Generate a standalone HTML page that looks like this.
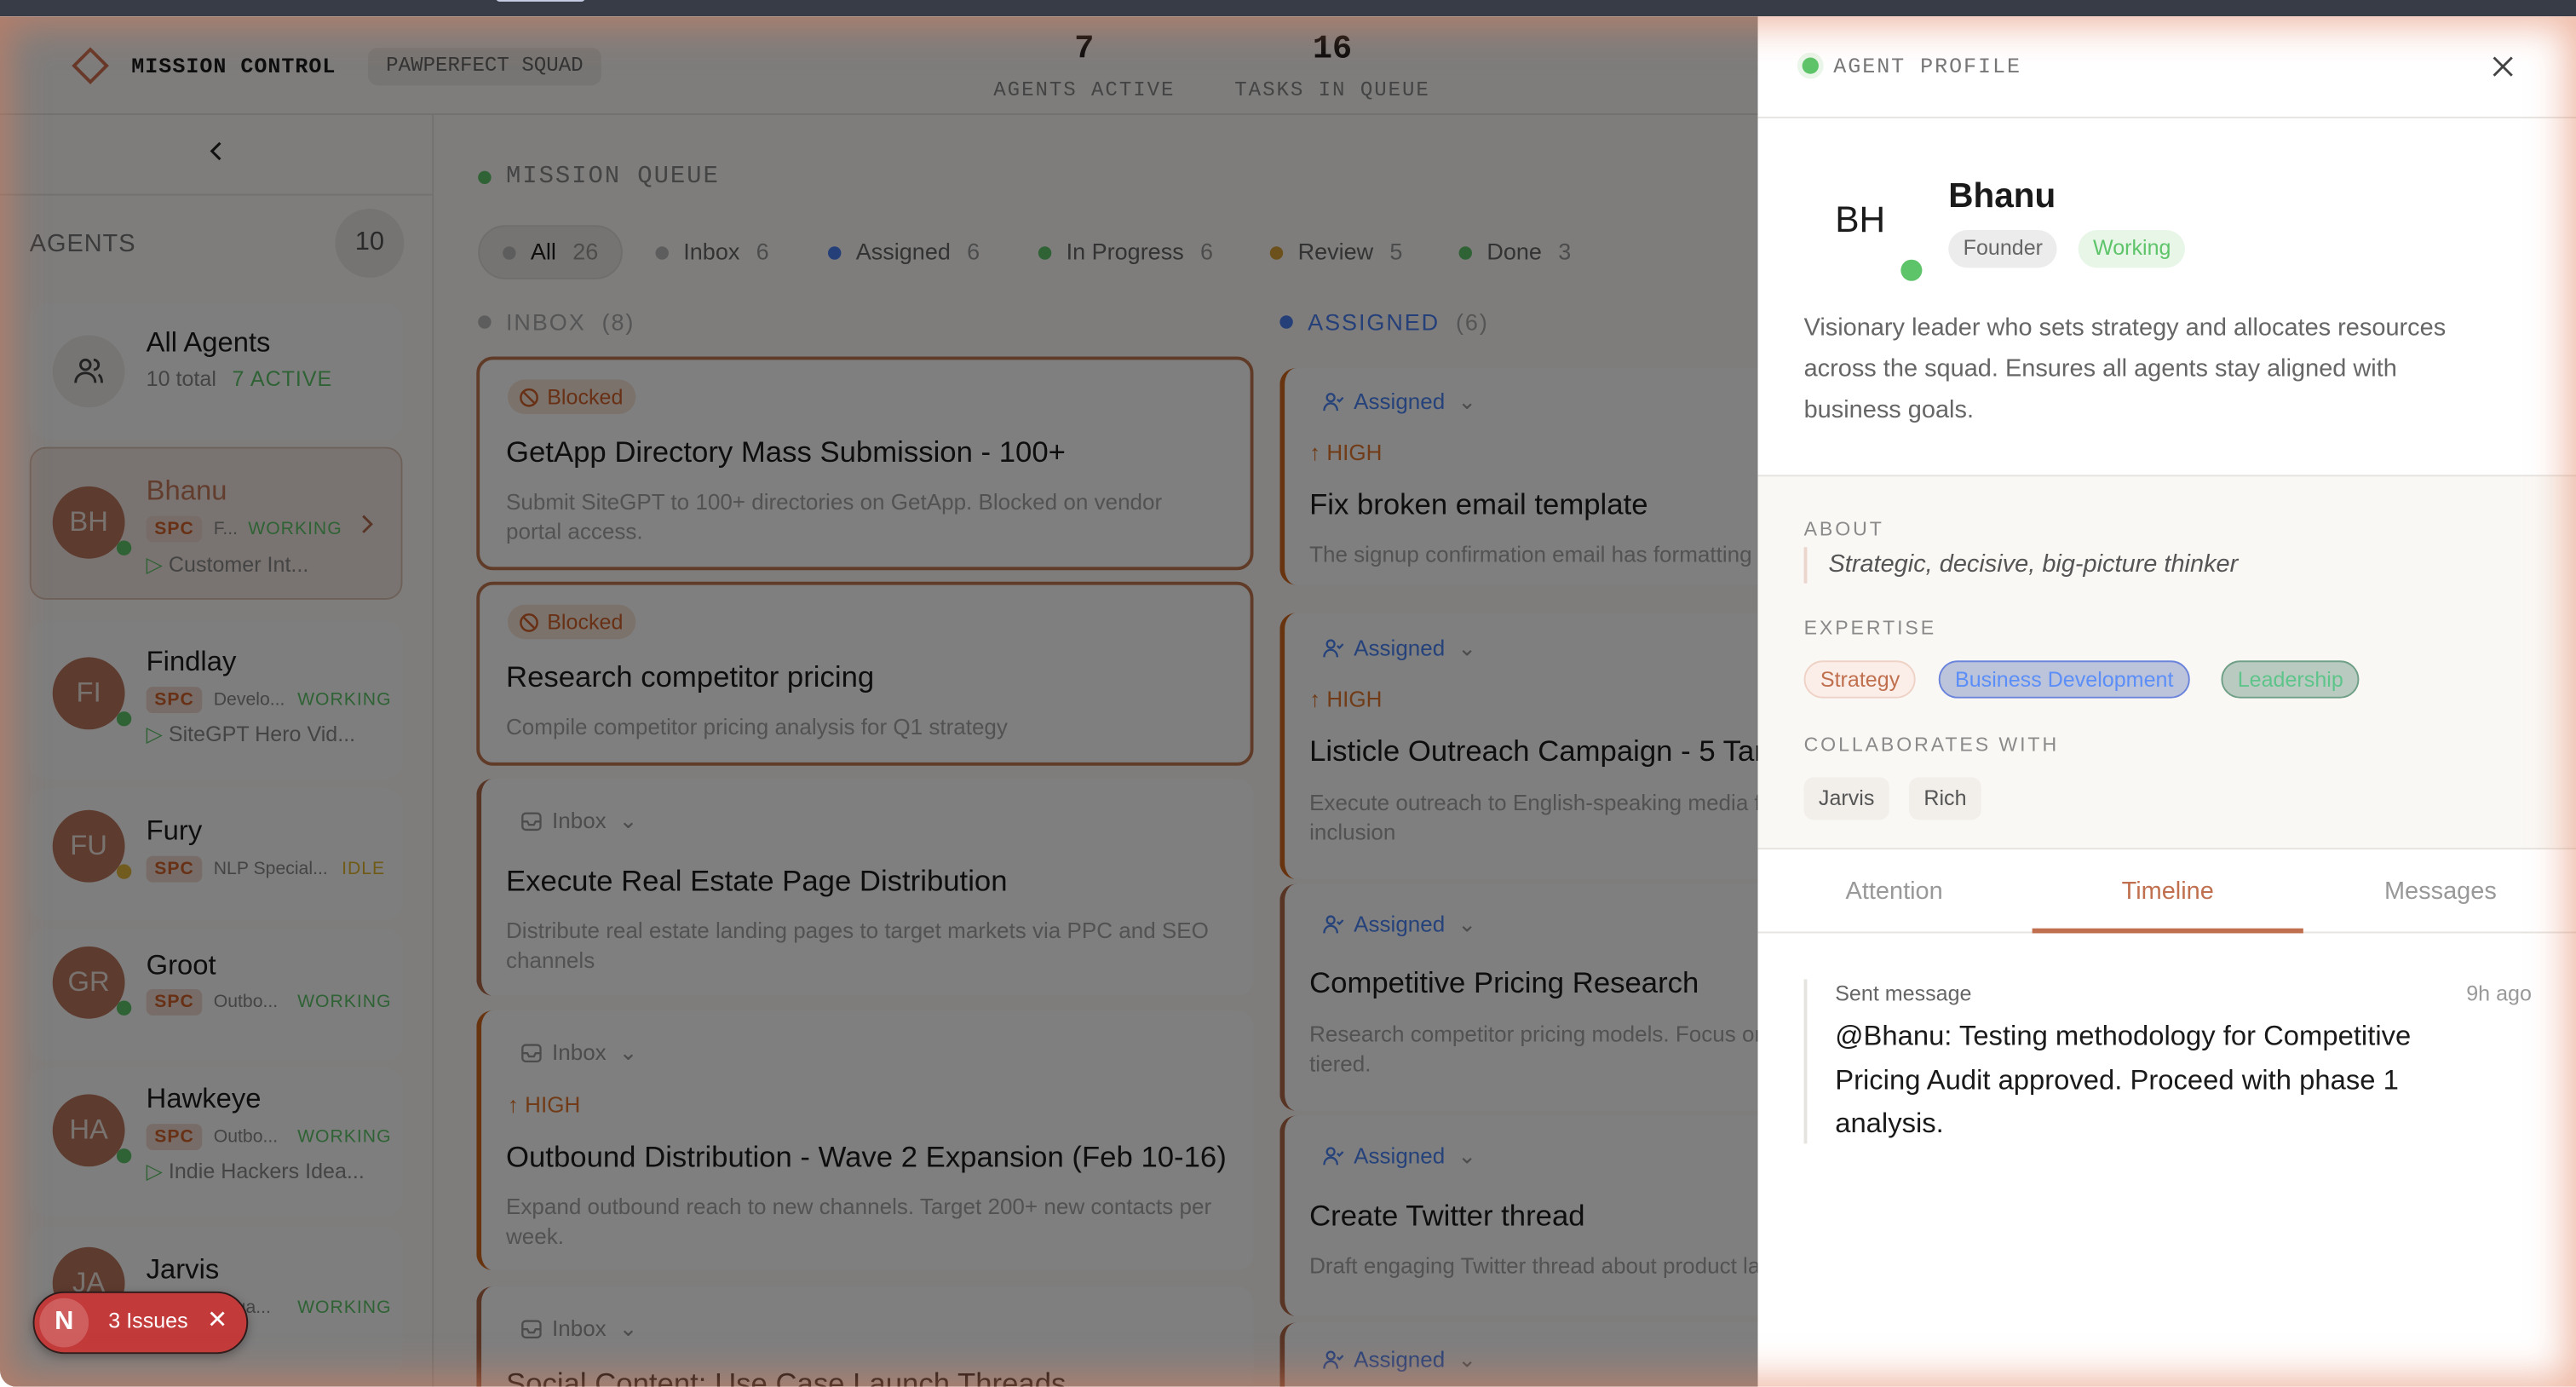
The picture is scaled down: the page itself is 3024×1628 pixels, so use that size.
<!DOCTYPE html>
<html><head><meta charset="utf-8">
<style>
*{box-sizing:border-box;margin:0;padding:0}
html,body{width:3024px;height:1628px;overflow:hidden;background:#fff}
#s{position:absolute;left:0;top:0;width:1568px;height:844px;transform:scale(1.928571);transform-origin:0 0;font-family:"Liberation Sans",sans-serif;overflow:hidden;background:#fff}
.a{position:absolute}
.mono{font-family:"Liberation Mono",monospace}
#app{position:absolute;left:0;top:10px;width:1568px;height:834px;background:#fcfbf9;border-radius:0 0 0 10px;overflow:hidden}
#dim{position:absolute;left:0;top:0;width:1070px;height:834px;background:rgba(0,0,0,.5)}
.dot{position:absolute;width:8px;height:8px;border-radius:50%}
.av{position:absolute;width:44px;height:44px;border-radius:50%;background:#bd765e;color:#f2e6e0;font-size:17px;text-align:center;line-height:44px}
.av i{position:absolute;right:-4px;bottom:2px;width:9px;height:9px;border-radius:50%;background:#5ec46a}
.spc{position:absolute;background:#efd9cf;color:#d0612a;font-size:11px;font-weight:bold;padding:2px 5px;border-radius:4px;letter-spacing:.5px}
.card{position:absolute;background:#fff;border-radius:10px;border-left:3px solid #b0694a}
.card.bl{border:2px solid #c0774f}
.card.hi{border-left-color:#d0661e}
.t{position:absolute;font-size:18px;color:#1c1c1c;white-space:nowrap}
.d{position:absolute;font-size:13.5px;color:#a4a4a4;line-height:18px}
.sub{position:absolute;font-size:13.5px;color:#999;white-space:nowrap}
.sub svg,.as svg{vertical-align:-2px;margin-right:6px}
.as{position:absolute;font-size:13.5px;color:#4d85f5;white-space:nowrap}
.hi2{position:absolute;font-size:13.5px;color:#e0762d}
.ag{position:absolute;left:18px;width:227px;background:#fdfdfc;border-radius:10px}
.nm{position:absolute;font-size:17px;color:#1c1c1c}
.role{position:absolute;font-size:11px;color:#888}
.wk{position:absolute;font-size:11px;color:#5ec46a;letter-spacing:.5px}
.task{position:absolute;font-size:13px;color:#888;white-space:nowrap}
.lbl{position:absolute;font-size:12px;color:#8a8a8a;letter-spacing:1.5px}
.pill{position:absolute;font-size:13px;border-radius:12px;height:23px;line-height:21px;padding:0 9px}
.fl{display:inline-block;width:8px;height:8px;border-radius:50%;margin-right:9px}
</style></head><body>
<div id="s">
<div class="a" style="left:0;top:0;width:1568px;height:10px;background:#383c46"></div>
<div class="a" style="left:302px;top:-3px;width:54px;height:4px;border-radius:3px;background:#c8cde6"></div>
<div id="app">
  <div class="a" style="left:0;top:0;width:1070px;height:60px;border-bottom:1px solid #e4e2de"></div>
  <div class="a" style="left:47px;top:22px;width:16px;height:16px;border:2px solid #d07050;transform:rotate(45deg)"></div>
  <div class="a mono" style="left:80px;top:23px;font-size:13px;font-weight:bold;color:#1c1c1c;letter-spacing:.5px">MISSION CONTROL</div>
  <div class="a mono" style="left:224px;top:19px;width:142px;height:23px;background:#eeebe6;border-radius:6px;font-size:12.5px;color:#666;line-height:23px;text-align:center">PAWPERFECT SQUAD</div>
  <div class="a mono" style="left:600px;top:9px;width:120px;text-align:center;font-size:20px;font-weight:bold;color:#1c1c1c">7</div>
  <div class="a mono" style="left:590px;top:38px;width:140px;text-align:center;font-size:12.5px;color:#888;letter-spacing:1px">AGENTS ACTIVE</div>
  <div class="a mono" style="left:751px;top:9px;width:120px;text-align:center;font-size:20px;font-weight:bold;color:#1c1c1c">16</div>
  <div class="a mono" style="left:736px;top:38px;width:150px;text-align:center;font-size:12.5px;color:#888;letter-spacing:1px">TASKS IN QUEUE</div>
  <div class="a" style="left:263px;top:60px;width:1px;height:780px;background:#e4e2de"></div>
  <div class="a" style="left:0;top:108px;width:263px;height:1px;background:#e4e2de"></div>
  <svg class="a" style="left:125px;top:75px" width="14" height="14" viewBox="0 0 14 14"><path d="M9 2 L4 7 L9 12" fill="none" stroke="#222" stroke-width="1.6"/></svg>
  <div class="a" style="left:18px;top:130px;font-size:15px;color:#777;letter-spacing:.5px">AGENTS</div>
  <div class="a" style="left:204px;top:117px;width:42px;height:42px;border-radius:50%;background:#ece9e5;color:#555;font-size:16px;text-align:center;line-height:42px">10</div>
  <div class="ag" style="top:175px;height:82px"></div>
  <div class="a" style="left:32px;top:194px;width:44px;height:44px;border-radius:50%;background:#efebe6"></div>
  <svg class="a" style="left:43px;top:205px" width="22" height="22" viewBox="0 0 22 22" fill="none" stroke="#444" stroke-width="1.5"><circle cx="9" cy="7" r="3"/><path d="M3 18c0-4 3-6 6-6s6 2 6 6"/><path d="M14 4a3 3 0 010 6M17 13c1.5 1 2 3 2 5"/></svg>
  <div class="nm" style="left:89px;top:189px">All Agents</div>
  <div class="a" style="left:89px;top:213px;font-size:13px;color:#888">10 total <span style="color:#5ec46a;margin-left:6px;letter-spacing:.5px">7 ACTIVE</span></div>

  <div class="ag" style="top:262px;height:93px;background:#f3e9e3;border:1px solid #dcc3b5"></div>
  <div class="av" style="left:32px;top:286px">BH<i></i></div>
  <div class="nm" style="left:89px;top:279px;color:#c57a5c">Bhanu</div>
  <div class="spc" style="left:89px;top:304px">SPC</div>
  <div class="role" style="left:130px;top:306px">F...</div>
  <div class="wk" style="left:151px;top:306px">WORKING</div>
  <svg class="a" style="left:218px;top:302px" width="10" height="14" viewBox="0 0 10 14"><path d="M3 2l5 5-5 5" fill="none" stroke="#b06a4e" stroke-width="1.5"/></svg>
  <div class="task" style="left:89px;top:326px"><span style="color:#5ec46a">▷</span> Customer Int...</div>

  <div class="ag" style="top:368px;height:96px"></div>
  <div class="av" style="left:32px;top:390px">FI<i></i></div>
  <div class="nm" style="left:89px;top:383px">Findlay</div>
  <div class="spc" style="left:89px;top:408px">SPC</div>
  <div class="role" style="left:130px;top:410px">Develo...</div>
  <div class="wk" style="left:181px;top:410px">WORKING</div>
  <div class="task" style="left:89px;top:429px"><span style="color:#5ec46a">▷</span> SiteGPT Hero Vid...</div>

  <div class="ag" style="top:470px;height:80px"></div>
  <div class="av" style="left:32px;top:483px">FU<i style="background:#e4b73e"></i></div>
  <div class="nm" style="left:89px;top:486px">Fury</div>
  <div class="spc" style="left:89px;top:511px">SPC</div>
  <div class="role" style="left:130px;top:513px">NLP Special...</div>
  <div class="wk" style="left:208px;top:513px;color:#e0b52e">IDLE</div>

  <div class="ag" style="top:555px;height:80px"></div>
  <div class="av" style="left:32px;top:566px">GR<i></i></div>
  <div class="nm" style="left:89px;top:568px">Groot</div>
  <div class="spc" style="left:89px;top:592px">SPC</div>
  <div class="role" style="left:130px;top:594px">Outbo...</div>
  <div class="wk" style="left:181px;top:594px">WORKING</div>

  <div class="ag" style="top:640px;height:90px"></div>
  <div class="av" style="left:32px;top:656px">HA<i></i></div>
  <div class="nm" style="left:89px;top:649px">Hawkeye</div>
  <div class="spc" style="left:89px;top:674px">SPC</div>
  <div class="role" style="left:130px;top:676px">Outbo...</div>
  <div class="wk" style="left:181px;top:676px">WORKING</div>
  <div class="task" style="left:89px;top:695px"><span style="color:#5ec46a">▷</span> Indie Hackers Idea...</div>

  <div class="ag" style="top:737px;height:90px"></div>
  <div class="av" style="left:32px;top:749px">JA<i></i></div>
  <div class="nm" style="left:89px;top:753px">Jarvis</div>
  <div class="role" style="left:130px;top:780px">Squa...</div>
  <div class="wk" style="left:181px;top:780px">WORKING</div>

  <!-- main -->
  <div class="dot" style="left:291px;top:94px;background:#5ec46a"></div>
  <div class="a mono" style="left:308px;top:89px;font-size:15px;color:#888;letter-spacing:1px">MISSION QUEUE</div>
  <div class="a" style="left:291px;top:127px;width:88px;height:33px;border-radius:17px;background:#ece9e4;border:1px solid #e0ddd8"></div>
  <div class="a" style="left:306px;top:135px;font-size:14px;white-space:nowrap">
    <span class="fl" style="background:#bbb"></span><span style="color:#1c1c1c">All</span><span style="color:#999;margin-left:10px">26</span>
  </div>
  <div class="a" style="left:399px;top:135px;font-size:14px;white-space:nowrap"><span class="fl" style="background:#bbb"></span><span style="color:#666">Inbox</span><span style="color:#999;margin-left:10px">6</span></div>
  <div class="a" style="left:504px;top:135px;font-size:14px;white-space:nowrap"><span class="fl" style="background:#4a7ef0"></span><span style="color:#666">Assigned</span><span style="color:#999;margin-left:10px">6</span></div>
  <div class="a" style="left:632px;top:135px;font-size:14px;white-space:nowrap"><span class="fl" style="background:#5ec46a"></span><span style="color:#666">In Progress</span><span style="color:#999;margin-left:10px">6</span></div>
  <div class="a" style="left:773px;top:135px;font-size:14px;white-space:nowrap"><span class="fl" style="background:#d9a23a"></span><span style="color:#666">Review</span><span style="color:#999;margin-left:10px">5</span></div>
  <div class="a" style="left:888px;top:135px;font-size:14px;white-space:nowrap"><span class="fl" style="background:#5ec46a"></span><span style="color:#666">Done</span><span style="color:#999;margin-left:10px">3</span></div>
  <div class="dot" style="left:291px;top:182px;background:#bbb"></div>
  <div class="a" style="left:308px;top:178px;font-size:14px;color:#aaa;letter-spacing:1px">INBOX &nbsp;(8)</div>
  <div class="dot" style="left:779px;top:182px;background:#4a7ef0"></div>
  <div class="a" style="left:796px;top:178px;font-size:14px;color:#4a7ef0;letter-spacing:1px">ASSIGNED <span style="color:#aaa">&nbsp;(6)</span></div>

  <!-- col1 -->
  <div class="card bl" style="left:290px;top:207px;width:473px;height:130px"></div>
  <div class="pill" style="left:309px;top:221px;background:#f8e4d8;color:#d0612a;height:21px;line-height:21px;padding:0 8px 0 24px">Blocked</div>
  <svg class="a" style="left:316px;top:226px" width="12" height="12" viewBox="0 0 12 12" fill="none" stroke="#d0612a" stroke-width="1.3"><circle cx="6" cy="6" r="5"/><path d="M2.5 2.5l7 7"/></svg>
  <div class="t" style="left:308px;top:255px">GetApp Directory Mass Submission - 100+</div>
  <div class="d" style="left:308px;top:287px;width:420px">Submit SiteGPT to 100+ directories on GetApp. Blocked on vendor portal access.</div>

  <div class="card bl" style="left:290px;top:344px;width:473px;height:112px"></div>
  <div class="pill" style="left:309px;top:358px;background:#f8e4d8;color:#d0612a;height:21px;line-height:21px;padding:0 8px 0 24px">Blocked</div>
  <svg class="a" style="left:316px;top:363px" width="12" height="12" viewBox="0 0 12 12" fill="none" stroke="#d0612a" stroke-width="1.3"><circle cx="6" cy="6" r="5"/><path d="M2.5 2.5l7 7"/></svg>
  <div class="t" style="left:308px;top:392px">Research competitor pricing</div>
  <div class="d" style="left:308px;top:424px">Compile competitor pricing analysis for Q1 strategy</div>

  <div class="card" style="left:290px;top:464px;width:473px;height:132px"></div>
  <div class="sub" style="left:317px;top:482px"><svg width="13" height="12" viewBox="0 0 13 12" fill="none" stroke="#999" stroke-width="1.2"><rect x="1" y="1" width="11" height="10" rx="2"/><path d="M1 6h3l1 2h3l1-2h3"/></svg>Inbox <span style="margin-left:4px">⌄</span></div>
  <div class="t" style="left:308px;top:516px">Execute Real Estate Page Distribution</div>
  <div class="d" style="left:308px;top:548px;width:450px">Distribute real estate landing pages to target markets via PPC and SEO channels</div>

  <div class="card hi" style="left:290px;top:605px;width:473px;height:158px"></div>
  <div class="sub" style="left:317px;top:623px"><svg width="13" height="12" viewBox="0 0 13 12" fill="none" stroke="#999" stroke-width="1.2"><rect x="1" y="1" width="11" height="10" rx="2"/><path d="M1 6h3l1 2h3l1-2h3"/></svg>Inbox <span style="margin-left:4px">⌄</span></div>
  <div class="hi2" style="left:309px;top:655px">↑ HIGH</div>
  <div class="t" style="left:308px;top:684px">Outbound Distribution - Wave 2 Expansion (Feb 10-16)</div>
  <div class="d" style="left:308px;top:716px;width:430px">Expand outbound reach to new channels. Target 200+ new contacts per week.</div>

  <div class="card" style="left:290px;top:773px;width:473px;height:80px"></div>
  <div class="sub" style="left:317px;top:791px"><svg width="13" height="12" viewBox="0 0 13 12" fill="none" stroke="#999" stroke-width="1.2"><rect x="1" y="1" width="11" height="10" rx="2"/><path d="M1 6h3l1 2h3l1-2h3"/></svg>Inbox <span style="margin-left:4px">⌄</span></div>
  <div class="t" style="left:308px;top:822px">Social Content: Use Case Launch Threads</div>

  <!-- col2 -->
  <div class="card hi" style="left:779px;top:214px;width:320px;height:132px"></div>
  <div class="as" style="left:805px;top:227px"><svg width="13" height="13" viewBox="0 0 13 13" fill="none" stroke="#4d85f5" stroke-width="1.2"><circle cx="5" cy="4" r="2.3"/><path d="M1 12c0-3 2-4.5 4-4.5s4 1.5 4 4.5M9 5l1.3 1.3L12.5 4"/></svg>Assigned <span style="color:#999;margin-left:4px">⌄</span></div>
  <div class="hi2" style="left:797px;top:258px">↑ HIGH</div>
  <div class="t" style="left:797px;top:287px">Fix broken email template</div>
  <div class="d" style="left:797px;top:319px;white-space:nowrap">The signup confirmation email has formatting issues</div>

  <div class="card hi" style="left:779px;top:363px;width:320px;height:162px"></div>
  <div class="as" style="left:805px;top:377px"><svg width="13" height="13" viewBox="0 0 13 13" fill="none" stroke="#4d85f5" stroke-width="1.2"><circle cx="5" cy="4" r="2.3"/><path d="M1 12c0-3 2-4.5 4-4.5s4 1.5 4 4.5M9 5l1.3 1.3L12.5 4"/></svg>Assigned <span style="color:#999;margin-left:4px">⌄</span></div>
  <div class="hi2" style="left:797px;top:408px">↑ HIGH</div>
  <div class="t" style="left:797px;top:437px">Listicle Outreach Campaign - 5 Targets</div>
  <div class="d" style="left:797px;top:470px;width:290px">Execute outreach to English-speaking media for inclusion</div>

  <div class="card" style="left:779px;top:528px;width:320px;height:138px"></div>
  <div class="as" style="left:805px;top:545px"><svg width="13" height="13" viewBox="0 0 13 13" fill="none" stroke="#4d85f5" stroke-width="1.2"><circle cx="5" cy="4" r="2.3"/><path d="M1 12c0-3 2-4.5 4-4.5s4 1.5 4 4.5M9 5l1.3 1.3L12.5 4"/></svg>Assigned <span style="color:#999;margin-left:4px">⌄</span></div>
  <div class="t" style="left:797px;top:578px">Competitive Pricing Research</div>
  <div class="d" style="left:797px;top:611px;width:300px">Research competitor pricing models. Focus on tiered.</div>

  <div class="card" style="left:779px;top:669px;width:320px;height:122px"></div>
  <div class="as" style="left:805px;top:686px"><svg width="13" height="13" viewBox="0 0 13 13" fill="none" stroke="#4d85f5" stroke-width="1.2"><circle cx="5" cy="4" r="2.3"/><path d="M1 12c0-3 2-4.5 4-4.5s4 1.5 4 4.5M9 5l1.3 1.3L12.5 4"/></svg>Assigned <span style="color:#999;margin-left:4px">⌄</span></div>
  <div class="t" style="left:797px;top:720px">Create Twitter thread</div>
  <div class="d" style="left:797px;top:752px;white-space:nowrap">Draft engaging Twitter thread about product launch</div>

  <div class="card" style="left:779px;top:795px;width:320px;height:80px"></div>
  <div class="as" style="left:805px;top:810px"><svg width="13" height="13" viewBox="0 0 13 13" fill="none" stroke="#4d85f5" stroke-width="1.2"><circle cx="5" cy="4" r="2.3"/><path d="M1 12c0-3 2-4.5 4-4.5s4 1.5 4 4.5M9 5l1.3 1.3L12.5 4"/></svg>Assigned <span style="color:#999;margin-left:4px">⌄</span></div>

  <div id="dim"></div>

  <div class="a" style="left:20px;top:776px;width:131px;height:38px;border-radius:19px;background:#c23a3a;border:1.5px solid #2a1a1a;box-shadow:0 2px 6px rgba(0,0,0,.3)"></div>
  <div class="a" style="left:24px;top:780px;width:30px;height:30px;border-radius:50%;background:#cf5e5e;color:#fff;font-size:16px;font-weight:bold;text-align:center;line-height:30px">N</div>
  <div class="a" style="left:66px;top:786px;font-size:13px;color:#fff">3 Issues</div>
  <div class="a" style="left:126px;top:784px;font-size:15px;color:#fff">✕</div>

  <!-- right panel -->
  <div class="a" style="left:1070px;top:0;width:498px;height:834px;background:#fff"></div>
  <div class="a" style="left:1097px;top:25px;width:10px;height:10px;border-radius:50%;background:#5ec46a;box-shadow:0 0 0 3px #eaf6ea"></div>
  <div class="a mono" style="left:1116px;top:23px;font-size:13px;color:#777;letter-spacing:1px">AGENT PROFILE</div>
  <svg class="a" style="left:1517px;top:24px" width="13" height="13" viewBox="0 0 13 13"><path d="M1 1l11 11M12 1L1 12" stroke="#444" stroke-width="1.5"/></svg>
  <div class="a" style="left:1070px;top:61px;width:498px;height:1px;background:#e6e4e0"></div>
  <div class="a" style="left:1117px;top:111px;font-size:22px;color:#1a1a1a">BH</div>
  <div class="a" style="left:1157px;top:148px;width:13px;height:13px;border-radius:50%;background:#5ec46a"></div>
  <div class="a" style="left:1186px;top:98px;font-size:21px;font-weight:bold;color:#1a1a1a">Bhanu</div>
  <div class="pill" style="left:1186px;top:130px;background:#ececec;color:#666">Founder</div>
  <div class="pill" style="left:1265px;top:130px;background:#e8f6e8;color:#5ec46a">Working</div>
  <div class="a" style="left:1098px;top:177px;width:418px;font-size:15px;line-height:25px;color:#666">Visionary leader who sets strategy and allocates resources across the squad. Ensures all agents stay aligned with business goals.</div>
  <div class="a" style="left:1070px;top:279px;width:498px;height:228px;background:#faf8f5;border-top:1px solid #e6e4e0;border-bottom:1px solid #e6e4e0"></div>
  <div class="lbl" style="left:1098px;top:305px">ABOUT</div>
  <div class="a" style="left:1098px;top:323px;width:2px;height:22px;background:#ead6cc"></div>
  <div class="a" style="left:1113px;top:325px;font-size:15px;font-style:italic;color:#555">Strategic, decisive, big-picture thinker</div>
  <div class="lbl" style="left:1098px;top:365px">EXPERTISE</div>
  <div class="pill" style="left:1098px;top:392px;background:#fbeee8;border:1px solid #efd2c6;color:#c0704f">Strategy</div>
  <div class="pill" style="left:1180px;top:392px;background:#bcc4dc;border:1px solid #6b84db;color:#5b8ef7">Business Development</div>
  <div class="pill" style="left:1352px;top:392px;background:#b9cbc1;border:1px solid #6f9f86;color:#5ec48a">Leadership</div>
  <div class="lbl" style="left:1098px;top:436px">COLLABORATES WITH</div>
  <div class="pill" style="left:1098px;top:463px;height:26px;line-height:26px;border-radius:6px;background:#f2efeb;color:#555">Jarvis</div>
  <div class="pill" style="left:1162px;top:463px;height:26px;line-height:26px;border-radius:6px;background:#f2efeb;color:#555">Rich</div>
  <div class="a" style="left:1070px;top:524px;width:166px;text-align:center;font-size:15px;color:#999">Attention</div>
  <div class="a" style="left:1237px;top:524px;width:165px;text-align:center;font-size:15px;color:#c0704f">Timeline</div>
  <div class="a" style="left:1403px;top:524px;width:165px;text-align:center;font-size:15px;color:#999">Messages</div>
  <div class="a" style="left:1070px;top:557px;width:498px;height:1px;background:#e6e4e0"></div>
  <div class="a" style="left:1237px;top:555px;width:165px;height:3px;background:#c0704f"></div>
  <div class="a" style="left:1098px;top:586px;width:2px;height:100px;background:#e6e4e0"></div>
  <div class="a" style="left:1117px;top:587px;font-size:13px;color:#666">Sent message</div>
  <div class="a" style="left:1480px;top:587px;width:61px;text-align:right;font-size:13px;color:#999">9h ago</div>
  <div class="a" style="left:1117px;top:608px;width:380px;font-size:17px;line-height:26.5px;color:#1a1a1a">@Bhanu: Testing methodology for Competitive Pricing Audit approved. Proceed with phase 1 analysis.</div>
</div>
<div class="a" style="left:0;top:10px;width:1568px;height:834px;border-radius:0 0 0 10px;box-shadow:inset 0 0 22px 6px rgba(226,130,95,.55);pointer-events:none"></div>
</div>
</body></html>
